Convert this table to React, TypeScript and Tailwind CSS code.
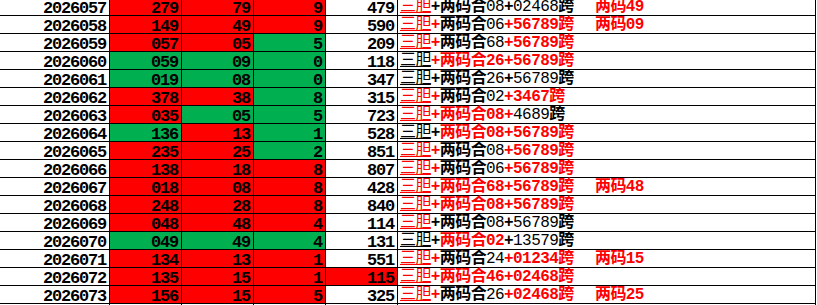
type Bg = 'r' | 'g' | 'w';

type Row = {
  id: string;
  b: string;
  c: string;
  d: string;
  e: string;
  bg: [Bg, Bg, Bg, Bg];
  dan: boolean; // 三胆 red?
  parts: [string, boolean][]; // text, red?
  note?: string;
};

const rows: Row[] = [
  { id: '2026057', b: '279', c: '79', d: '9', e: '479', bg: ['r', 'r', 'r', 'w'], dan: true, parts: [['+两码合08+02468跨', false]], note: '两码49' },
  { id: '2026058', b: '149', c: '49', d: '9', e: '590', bg: ['r', 'r', 'r', 'w'], dan: true, parts: [['+', true], ['两码合06', false], ['+56789跨', true]], note: '两码09' },
  { id: '2026059', b: '057', c: '05', d: '5', e: '209', bg: ['r', 'r', 'g', 'w'], dan: true, parts: [['+', true], ['两码合68', false], ['+56789跨', true]] },
  { id: '2026060', b: '059', c: '09', d: '0', e: '118', bg: ['g', 'g', 'g', 'w'], dan: false, parts: [['+两码合26+56789跨', true]] },
  { id: '2026061', b: '019', c: '08', d: '0', e: '347', bg: ['g', 'g', 'g', 'w'], dan: false, parts: [['+两码合26+56789跨', false]] },
  { id: '2026062', b: '378', c: '38', d: '8', e: '315', bg: ['r', 'r', 'g', 'w'], dan: true, parts: [['+', true], ['两码合02', false], ['+3467跨', true]] },
  { id: '2026063', b: '035', c: '05', d: '5', e: '723', bg: ['r', 'g', 'g', 'w'], dan: true, parts: [['+两码合08+', true], ['4689跨', false]] },
  { id: '2026064', b: '136', c: '13', d: '1', e: '528', bg: ['g', 'r', 'g', 'w'], dan: false, parts: [['+', false], ['两码合08+56789跨', true]] },
  { id: '2026065', b: '235', c: '25', d: '2', e: '851', bg: ['r', 'r', 'g', 'w'], dan: true, parts: [['+', true], ['两码合08', false], ['+56789跨', true]] },
  { id: '2026066', b: '138', c: '18', d: '8', e: '807', bg: ['r', 'r', 'r', 'w'], dan: true, parts: [['+', true], ['两码合06', false], ['+56789跨', true]] },
  { id: '2026067', b: '018', c: '08', d: '8', e: '428', bg: ['r', 'r', 'r', 'w'], dan: true, parts: [['+两码合68+56789跨', true]], note: '两码48' },
  { id: '2026068', b: '248', c: '28', d: '8', e: '840', bg: ['r', 'r', 'r', 'w'], dan: true, parts: [['+两码合08+56789跨', true]] },
  { id: '2026069', b: '048', c: '48', d: '4', e: '114', bg: ['r', 'r', 'r', 'w'], dan: true, parts: [['+两码合08+56789跨', false]] },
  { id: '2026070', b: '049', c: '49', d: '4', e: '131', bg: ['g', 'g', 'g', 'w'], dan: false, parts: [['+', false], ['两码合02', true], ['+13579跨', false]] },
  { id: '2026071', b: '134', c: '13', d: '1', e: '551', bg: ['r', 'r', 'r', 'w'], dan: true, parts: [['+', true], ['两码合24', false], ['+01234跨', true]], note: '两码15' },
  { id: '2026072', b: '135', c: '15', d: '1', e: '115', bg: ['r', 'r', 'r', 'r'], dan: true, parts: [['+两码合46+02468跨', true]] },
  { id: '2026073', b: '156', c: '15', d: '5', e: '325', bg: ['r', 'r', 'r', 'w'], dan: true, parts: [['+', true], ['两码合26', false], ['+02468跨', true]], note: '两码25' },
];

const bgClass: Record<Bg, string> = {
  r: 'bg-[#ff0000]',
  g: 'bg-[#00b050]',
  w: 'bg-white',
};

const font = "font-['Liberation_Mono','Noto_Sans_CJK_SC',monospace]";

function Segment({ text, red }: { text: string; red: boolean }) {
  // black digits are thin, everything else in the note column is bold
  return (
    <>
      {text.split('').map((ch, i) => {
        const digit = /[0-9]/.test(ch);
        const bold = red || !digit;
        return (
          <span
            key={i}
            className={`${red ? 'text-[#ff0000]' : 'text-black'} ${bold ? 'font-bold' : 'font-normal'}`}
          >
            {ch}
          </span>
        );
      })}
    </>
  );
}

function NumCell({ value, bg, w, first }: { value: string; bg: Bg; w: string; first: boolean }) {
  return (
    <div className={`${w} ${bgClass[bg]} ${first ? 'pt-[3px]' : 'pt-[5px]'} shrink-0 h-full border-r border-black pr-[3px] text-right font-bold text-[17px] tracking-[-1.2px]`}>
      {value}
    </div>
  );
}

function EmptyRow() {
  return (
    <div className="flex w-[816px] h-[18px] border-b border-black">
      <div className="w-[110px] shrink-0 h-full border-r border-black" />
      <div className="w-[72px] shrink-0 h-full border-r border-black" />
      <div className="w-[72px] shrink-0 h-full border-r border-black" />
      <div className="w-[72px] shrink-0 h-full border-r border-black" />
      <div className="w-[72px] shrink-0 h-full border-r border-black" />
      <div className="w-[418px] shrink-0 h-full border-r border-black" />
    </div>
  );
}

export default function App() {
  return (
    <div className={`w-[817px] h-[305px] overflow-hidden bg-white text-black ${font} text-[16px] leading-[12px] tracking-[-0.6px]`}>
      {rows.map((row, idx) => {
        const first = idx === 0;
        return (
          <div key={row.id} className={`${first ? 'h-[16px]' : 'h-[18px]'} flex w-[816px] border-b border-black`}>
            <NumCell value={row.id} bg="w" w="w-[110px]" first={first} />
            <NumCell value={row.b} bg={row.bg[0]} w="w-[72px]" first={first} />
            <NumCell value={row.c} bg={row.bg[1]} w="w-[72px]" first={first} />
            <NumCell value={row.d} bg={row.bg[2]} w="w-[72px]" first={first} />
            <NumCell value={row.e} bg={row.bg[3]} w="w-[72px]" first={first} />
            <div className={`${first ? 'pt-[1px]' : 'pt-[3px]'} w-[418px] shrink-0 h-full border-r border-black pl-[2px] whitespace-nowrap flex`}>
              <div className="w-[195px] shrink-0">
                <span className={`${row.dan ? 'text-[#ff0000] decoration-[#ff0000]' : 'text-black decoration-black'} font-normal underline underline-offset-[1px]`}>
                  三胆
                </span>
                {row.parts.map(([t, red], i) => (
                  <Segment key={i} text={t} red={red} />
                ))}
              </div>
              {row.note && (
                <div className="text-[#ff0000] font-bold">{row.note}</div>
              )}
            </div>
          </div>
        );
      })}
      <EmptyRow />
    </div>
  );
}
